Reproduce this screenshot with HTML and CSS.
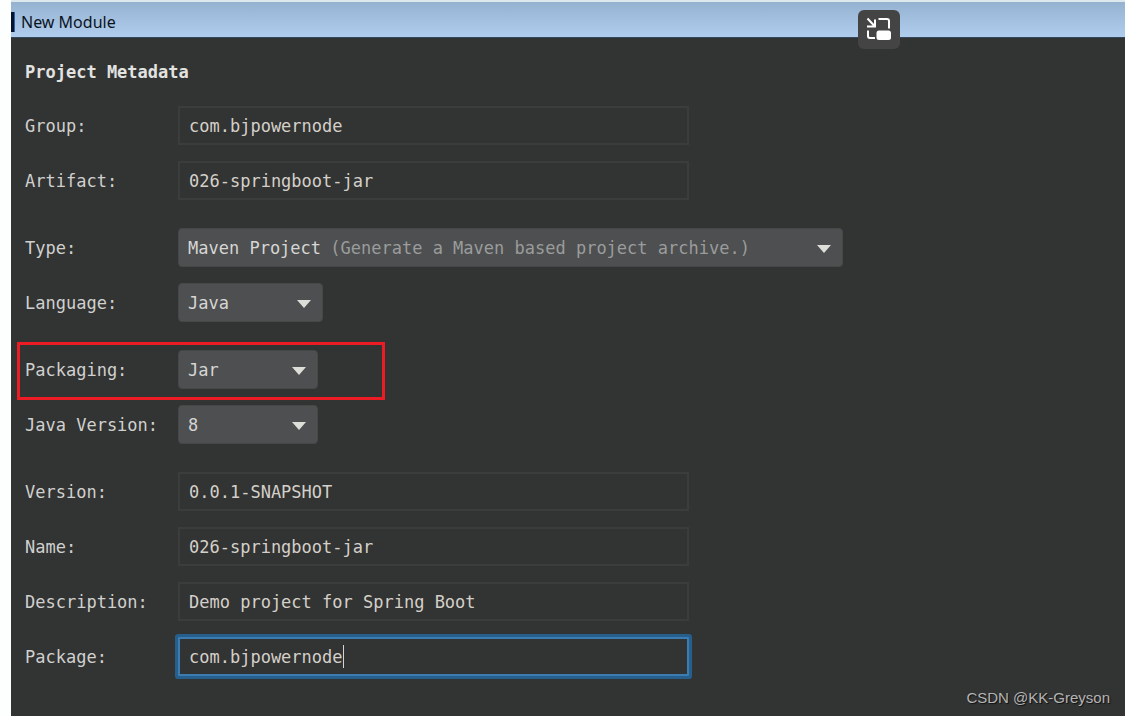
FILE: index.html
```html
<!DOCTYPE html>
<html lang="en">
<head>
<meta charset="utf-8">
<title>New Module</title>
<link rel="stylesheet" href="styles.css">
</head>
<body>
<div class="window">
  <header class="titlebar">
    <span class="app-icon"></span>
    <h1 class="window-title">New Module</h1>
    <button class="pip" type="button" aria-label="Picture in picture">
      <svg width="26" height="24" viewBox="0 0 26 24" fill="none" stroke="#fff" stroke-width="2">
        <path d="M1.500 1.500l7 7.500M1 9.500h8.500M9 2.500v8"/>
        <path d="M12.500 2H21q2 0 2 2v7.500"/>
        <path d="M2 13.500v5.500q0 2 2 2h5"/>
        <rect x="10.500" y="13.500" width="14.500" height="9.500" rx="2.500" fill="#fff" stroke="none"/>
      </svg>
    </button>
  </header>
  <form class="form">
    <h2 class="heading">Project Metadata</h2>
    <div class="group">
      <div class="row"><label for="group">Group:</label><input class="field" id="group" type="text" value="com.bjpowernode"></div>
      <div class="row"><label for="artifact">Artifact:</label><input class="field" id="artifact" type="text" value="026-springboot-jar"></div>
    </div>
    <div class="group">
      <div class="row"><label for="type">Type:</label>
        <div class="combo combo-wide"><select id="type"><option>Maven Project</option></select><span class="hint">(Generate a Maven based project archive.)</span><svg class="arrow" viewBox="0 0 14 8"><path d="M0 0h14L7 8z"/></svg></div>
      </div>
      <div class="row"><label for="language">Language:</label>
        <div class="combo combo-medium"><select id="language"><option>Java</option></select><svg class="arrow" viewBox="0 0 14 8"><path d="M0 0h14L7 8z"/></svg></div>
      </div>
    </div>
    <div class="group">
      <div class="row marked"><label for="packaging">Packaging:</label>
        <div class="combo"><select id="packaging"><option>Jar</option></select><svg class="arrow" viewBox="0 0 14 8"><path d="M0 0h14L7 8z"/></svg></div>
      </div>
      <div class="row"><label for="java">Java Version:</label>
        <div class="combo"><select id="java"><option>8</option></select><svg class="arrow" viewBox="0 0 14 8"><path d="M0 0h14L7 8z"/></svg></div>
      </div>
    </div>
    <div class="group">
      <div class="row"><label for="version">Version:</label><input class="field" id="version" type="text" value="0.0.1-SNAPSHOT"></div>
      <div class="row"><label for="name">Name:</label><input class="field" id="name" type="text" value="026-springboot-jar"></div>
      <div class="row"><label for="description">Description:</label><input class="field" id="description" type="text" value="Demo project for Spring Boot"></div>
      <div class="row"><label for="package">Package:</label>
        <div class="active-field"><input class="field active" id="package" type="text" value="com.bjpowernode"><span class="caret"></span></div>
      </div>
    </div>
  </form>
  <footer class="credit">CSDN @KK-Greyson</footer>
</div>
</body>
</html>
```

FILE: styles.css
```css
*, *::before { box-sizing: border-box; }

body {
  margin: 0;
  background: #fdfefe;
}

.window {
  min-height: 100vh;
  margin-left: 11px;
  display: flex;
  flex-direction: column;
  background: #323333;
  color: #d0d0ce;
  font: 17px/24px "DejaVu Sans Mono", monospace;
}

.titlebar {
  position: relative;
  height: 38px;
  display: flex;
  align-items: center;
  gap: 6px;
  padding-top: 4px;
  border-top: 2px solid #dce8ec;
  border-bottom: 1px solid #34475c;
  background: linear-gradient(#95b2d1, #b0cdee);
}

.app-icon {
  width: 4px;
  height: 20px;
  background: #06132c;
  border-right: 1px solid #2e5e9e;
}

.window-title {
  margin: 0;
  color: #0b131d;
  font: 16px/24px "Noto Sans", sans-serif;
}

.pip {
  position: absolute;
  top: 8px;
  right: 225px;
  width: 42px;
  height: 39px;
  display: flex;
  align-items: center;
  justify-content: center;
  padding: 0 0 2px;
  border: 0;
  border-radius: 6px;
  background: #444;
}

.form {
  display: flex;
  flex-direction: column;
  gap: 28px;
  padding: 22px 14px 0;
}

.heading {
  margin: 0 0 -6px;
  color: #e2e2e0;
  font-size: 17px;
  line-height: 24px;
}

.group {
  display: flex;
  flex-direction: column;
  gap: 16px;
}

.row {
  position: relative;
  display: grid;
  grid-template-columns: 153px minmax(0, 1fr);
  align-items: center;
  height: 39px;
}

.marked::before {
  content: "";
  position: absolute;
  inset: -8px auto -11px -8px;
  width: 368px;
  border: 3px solid #ed1c24;
  pointer-events: none;
}

.field {
  width: 100%;
  max-width: 511px;
  height: 39px;
  padding: 0 9px;
  border: 2px solid #3b3c3c;
  background: #323333;
  color: #d4d0c9;
  font: inherit;
  outline: 0;
}

.active-field {
  position: relative;
}

.active {
  border: 2px solid #3b7db2;
  border-radius: 1px;
  box-shadow: 0 0 0 3px #265f8b;
}

.caret {
  position: absolute;
  top: 8px;
  left: calc(11px + 15ch);
  width: 1px;
  height: 23px;
  background: #d4d4d4;
}

.combo {
  position: relative;
  width: 100%;
  max-width: 140px;
}

.combo-medium { max-width: 145px; }
.combo-wide { max-width: 665px; }

.combo select {
  display: block;
  width: 100%;
  height: 39px;
  padding: 0 9px;
  appearance: none;
  border: 1px solid #464848;
  border-radius: 4px;
  background: #4d4f50;
  color: #d6d6d4;
  font: inherit;
}

.hint {
  position: absolute;
  top: 8px;
  left: calc(9px + 14ch);
  color: #9b9c9c;
  white-space: nowrap;
  pointer-events: none;
}

.arrow {
  position: absolute;
  top: 17px;
  right: 12px;
  width: 14px;
  height: 8px;
  fill: #deded9;
  pointer-events: none;
}

.credit {
  margin-top: auto;
  padding: 0 15px 6px;
  color: #b4b4b4;
  font: 15px/24px "Liberation Sans", sans-serif;
  text-align: right;
  text-shadow: 1px 1px 1px #111;
}
```
